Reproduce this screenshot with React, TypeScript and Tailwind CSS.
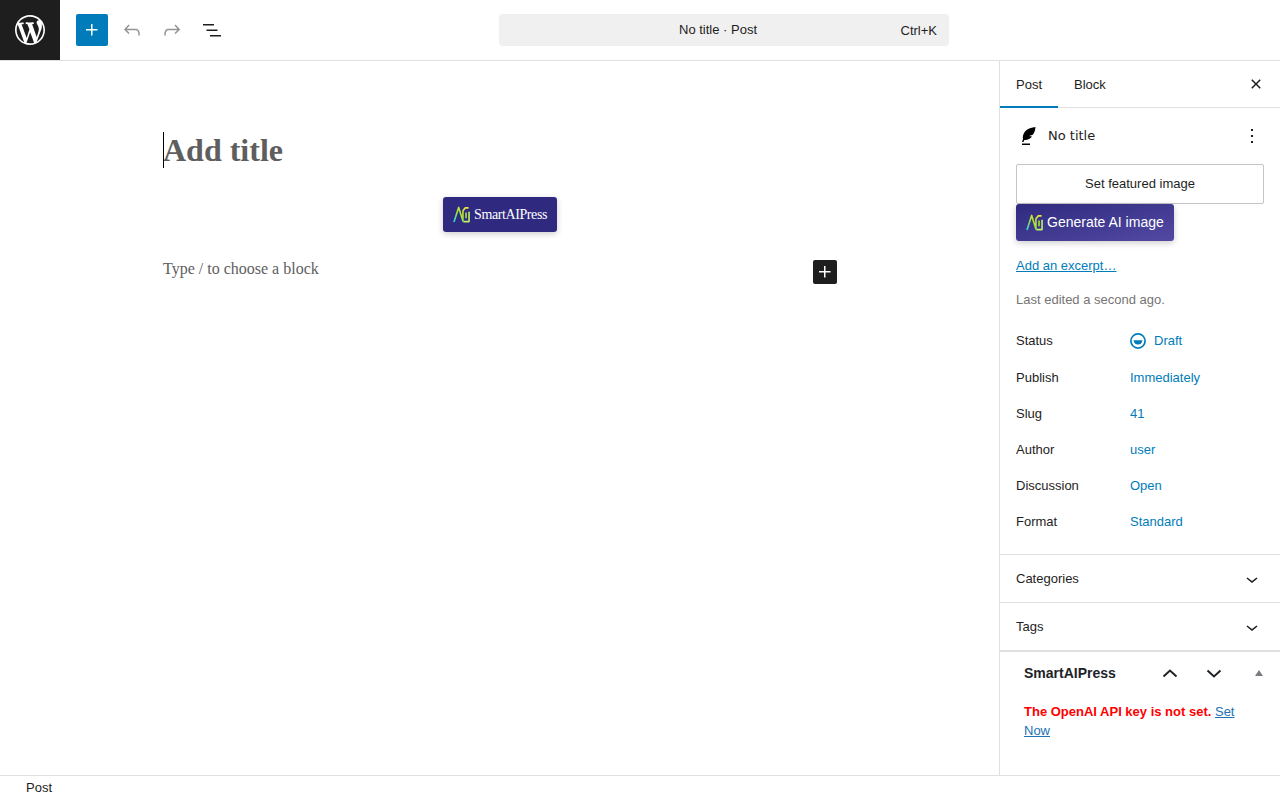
import React from 'react';

const sans = 'font-["Liberation_Sans",Arial,sans-serif]';

function AiLogo({ className, id }: { className: string; id: string }) {
  return (
    <svg viewBox="0 0 18 18" className={className} fill="none" strokeWidth="1.7" strokeLinejoin="round">
      <defs>
        <linearGradient id={id} gradientUnits="userSpaceOnUse" x1="0" y1="17" x2="17" y2="1">
          <stop offset="0" stopColor="#22d3ee" />
          <stop offset="0.45" stopColor="#a3e635" />
          <stop offset="1" stopColor="#fde047" />
        </linearGradient>
      </defs>
      <path d="M1 17 L6 1.500 L10.500 16 V5 L13 2 H16.500" stroke={`url(#${id})`} />
      <path d="M11 16.500 H17 V6" stroke="#bef264" />
      <path d="M13.800 7 V13" stroke="#a3e635" />
    </svg>
  );
}

function Chevron({ up }: { up?: boolean }) {
  return (
    <svg viewBox="0 0 24 24" className="w-6 h-6" fill="currentColor">
      <path d={up ? 'M6.5 12.4L12 8l5.5 4.4-.9 1.2L12 10l-4.5 3.6-1-1.2z' : 'M17.5 11.6L12 16l-5.5-4.4.9-1.2L12 14l4.5-3.6 1 1.2z'} />
    </svg>
  );
}

function MetaRow({ label, value, icon }: { label: string; value: string; icon?: boolean }) {
  return (
    <div className={`flex items-center h-9 ${icon ? 'mb-px' : ''}`}>
      <div className="w-[114px] text-[13px] text-[#1e1e1e]">{label}</div>
      <div className="flex items-center gap-2 text-[13px] text-[#007cba]">
        {icon && (
          <svg viewBox="0 0 16 16" className="w-4 h-4">
            <circle cx="8" cy="8" r="7.1" fill="none" stroke="#007cba" strokeWidth="1.7" />
            <path d="M3.6 7.2h8.8a4.4 4.4 0 0 1-8.800 0z" fill="#007cba" />
          </svg>
        )}
        {value}
      </div>
    </div>
  );
}

function Panel({ title }: { title: string }) {
  return (
    <div className="h-12 flex items-center justify-between pl-4 pr-4 border-b border-[#e0e0e0] text-[13px] text-[#1e1e1e]">
      {title}
      <Chevron />
    </div>
  );
}

export default function App() {
  return (
    <div className={`w-[1280px] h-[800px] overflow-hidden bg-white flex flex-col ${sans}`}>
      <header className="h-[61px] shrink-0 flex items-center border-b border-[#e0e0e0]">
        <div className="w-[60px] h-[60px] bg-[#1e1e1e] flex items-center justify-center">
          <svg viewBox="-2 -2 24 24" className="w-9 h-9" fill="#fff">
            <path d="M20 10c0-5.51-4.49-10-10-10C4.48 0 0 4.49 0 10c0 5.52 4.48 10 10 10 5.51 0 10-4.48 10-10zM7.78 15.37L4.37 6.22c.55-.02 1.17-.08 1.17-.08.5-.06.44-1.13-.06-1.11 0 0-1.45.11-2.37.11-.18 0-.37 0-.58-.01C4.12 2.69 6.87 1.11 10 1.11c2.33 0 4.45.87 6.05 2.34-.68-.11-1.65.39-1.65 1.58 0 .74.45 1.36.9 2.1.35.61.55 1.36.55 2.46 0 1.49-1.4 5-1.4 5l-3.03-8.37c.54-.02.82-.17.82-.17.5-.05.44-1.25-.06-1.22 0 0-1.44.12-2.38.12-.87 0-2.33-.12-2.33-.12-.5-.03-.56 1.2-.06 1.22l.92.08 1.26 3.41zM17.41 10c.24-.64.74-1.87.43-4.25.7 1.29 1.05 2.71 1.05 4.25 0 3.29-1.73 6.24-4.4 7.78.97-2.59 1.94-5.2 2.92-7.78zM6.1 18.09C3.12 16.65 1.11 13.53 1.11 10c0-1.3.23-2.48.72-3.59C3.25 10.3 4.67 14.2 6.1 18.09zm4.03-6.63l2.58 6.98c-.86.29-1.76.45-2.71.45-.79 0-1.57-.11-2.29-.33.81-2.38 1.62-4.74 2.42-7.1z" />
          </svg>
        </div>
        <div className="w-[439px] shrink-0 flex items-center pl-4">
          <button className="w-8 h-8 rounded-[2px] bg-[#007cba] flex items-center justify-center">
            <svg viewBox="0 0 24 24" className="w-6 h-6" fill="#fff">
              <path d="M11 12.5V17.5H12.5V12.5H17.5V11H12.5V6H11V11H6V12.5H11Z" />
            </svg>
          </button>
          <svg viewBox="0 0 24 24" className="w-6 h-6 ml-3" fill="#949494">
            <path d="M18.3 11.7c-.6-.6-1.4-.9-2.3-.9H6.7l2.9-3.3-1.1-1-4.5 5L8.5 16l1-1-2.7-2.7H16c.5 0 .9.2 1.3.5 1 1 1 3.4 1 4.5v.3h1.5v-.2c0-1.5 0-4.3-1.5-5.7z" />
          </svg>
          <svg viewBox="0 0 24 24" className="w-6 h-6 ml-4" fill="#949494">
            <path d="M15.6 6.5l-1.1 1 2.9 3.3H8c-.9 0-1.7.3-2.3.9-1.4 1.5-1.4 4.2-1.4 5.6v.2h1.5v-.3c0-1.1 0-3.5 1-4.5.3-.3.7-.5 1.3-.5h9.2L14.5 15l1.1 1.1 4.6-4.6-4.6-5z" />
          </svg>
          <svg viewBox="0 0 24 24" className="w-6 h-6 ml-4" fill="#1e1e1e">
            <path d="M3 6h11v1.5H3V6Zm3.5 5.5h11V13h-11v-1.5ZM21 17H10v1.5h11V17Z" />
          </svg>
        </div>
        <div className="w-[450px] h-8 bg-[#f0f0f0] rounded-[4px] flex items-center pl-[180px] pr-3 justify-between text-[13px] text-[#1e1e1e]">
          <span>No title · Post</span>
          <span className="pt-px text-[#1e1e1e]">Ctrl+K</span>
        </div>
      </header>

      <div className="flex-1 min-h-0 flex">
        <main className="w-[999px] shrink-0 relative pl-[163px] pt-[71px]">
          <div className="relative font-['Liberation_Serif',serif]">
            <div className="relative w-fit">
              <span className="absolute left-0 top-0 w-px h-9 bg-black" />
              <h1 className="h-9 leading-[36px] text-[32px] font-bold text-[#5e5e5e]">Add title</h1>
            </div>
            <div className="ml-[280px] mt-[29px] w-[114px] h-[35px] rounded-[3px] bg-[#2f2a7f] shadow-[0_2px_6px_rgba(0,0,0,0.2)] flex items-center pl-[10px] gap-[4px] text-white text-[14px] tracking-[-0.4px]">
              <AiLogo id="ai-a" className="w-[17px] h-[17px]" />
              SmartAIPress
            </div>
            <div className="mt-[28px] w-[674px] flex items-start justify-between">
              <span className="text-[16px] leading-[18px] text-[#5e5e5e]">Type / to choose a block</span>
              <button className="w-6 h-6 rounded-[2px] bg-[#1e1e1e] flex items-center justify-center">
                <svg viewBox="0 0 24 24" className="w-6 h-6" fill="#fff">
                  <path d="M11 12.5V17.5H12.5V12.5H17.5V11H12.5V6H11V11H6V12.5H11Z" />
                </svg>
              </button>
            </div>
          </div>
        </main>

        <aside className="w-[281px] shrink-0 border-l border-[#e0e0e0] flex flex-col">
          <div className="h-[47px] shrink-0 flex items-stretch border-b border-[#e0e0e0] text-[13px] text-[#1e1e1e]">
            <div className="w-[58px] pl-4 pt-[3px] flex items-center border-b-2 border-[#007cba] -mb-px">Post</div>
            <div className="pl-4 pt-px flex items-center">Block</div>
            <div className="ml-auto pr-3 flex items-center">
              <svg viewBox="0 0 24 24" className="w-6 h-6" fill="#1e1e1e">
                <path d="M12 13.06l3.712 3.713 1.061-1.06L13.061 12l3.712-3.712-1.06-1.06L12 10.938 8.288 7.227l-1.061 1.06L10.939 12l-3.712 3.712 1.06 1.061L12 13.061z" />
              </svg>
            </div>
          </div>

          <div className="h-[447px] shrink-0 px-4 border-b border-[#e0e0e0]">
            <div className="h-[56px] flex items-center">
              <svg viewBox="0 0 24 24" className="w-6 h-6" fill="#000">
                <path d="M19.500 3c-3.500.5-8 1.500-10.500 4.500C7 10 6.500 13 7 15l-1 3h1.500l.8-2c3 .3 6-1 7.700-3.500l-3-.5 3.800-1.200c1.500-2 2.500-4.500 2.700-7.800z" />
                <path d="M6 19.500h8V21H6z" />
              </svg>
              <span className="ml-2 font-['DejaVu_Sans',sans-serif] text-[13px] text-[#1e1e1e]">No title</span>
              <svg viewBox="0 0 24 24" className="w-6 h-6 ml-auto mr-0" fill="#1e1e1e">
                <path d="M13 19h-2v-2h2v2zm0-6h-2v-2h2v2zm0-6h-2V5h2v2z" />
              </svg>
            </div>
            <div className="h-10 w-[248px] border border-[#c3c4c7] rounded-[2px] flex items-center justify-center text-[13px] text-[#1e1e1e]">
              Set featured image
            </div>
            <div className="w-[158px] h-[37px] rounded-[3px] bg-gradient-to-br from-[#2f2a7f] to-[#5349a3] shadow-[0_2px_6px_rgba(0,0,0,0.2)] flex items-center pl-[10px] gap-[4px] text-[14px] text-white">
              <AiLogo id="ai-b" className="w-[17px] h-[17px]" />
              Generate AI image
            </div>
            <div className="mt-[17px] text-[13px] leading-[16px] text-[#007cba] underline">Add an excerpt…</div>
            <div className="mt-[18px] text-[13px] leading-[16px] text-[#757575]">Last edited a second ago.</div>
            <div className="mt-[15px] flex flex-col">
              <MetaRow label="Status" value="Draft" icon />
              <MetaRow label="Publish" value="Immediately" />
              <MetaRow label="Slug" value="41" />
              <MetaRow label="Author" value="user" />
              <MetaRow label="Discussion" value="Open" />
              <MetaRow label="Format" value="Standard" />
            </div>
          </div>

          <Panel title="Categories" />
          <Panel title="Tags" />

          <div className="flex-1 border-t border-[#e0e0e0]">
            <div className="h-[42px] flex items-center pl-6 text-[14px] font-bold text-[#1d2327]">
              SmartAIPress
              <svg viewBox="0 0 24 24" className="w-6 h-6 ml-auto text-[#1d2327]" fill="none" stroke="currentColor" strokeWidth="2">
                <path d="M5.500 15.500 L12 9.500 L18.500 15.500" />
              </svg>
              <svg viewBox="0 0 24 24" className="w-6 h-6 ml-5 text-[#1d2327]" fill="none" stroke="currentColor" strokeWidth="2">
                <path d="M5.500 9.500 L12 15.500 L18.500 9.500" />
              </svg>
              <div className="ml-[29px] mr-[17px] w-0 h-0 border-x-[4px] border-x-transparent border-b-[6px] border-b-[#787c82]" />
            </div>
            <div className="mt-2 pl-6 pr-4 text-[13px] leading-[19px]">
              <span className="font-bold text-[#ff0000]">The OpenAI API key is not set.</span>{' '}
              <span className="text-[#2271b1] underline">Set Now</span>
            </div>
          </div>
        </aside>
      </div>

      <footer className="h-[25px] shrink-0 border-t border-[#e0e0e0] pl-[26px] text-[13px] leading-[23px] text-[#1e1e1e]">Post</footer>
    </div>
  );
}
